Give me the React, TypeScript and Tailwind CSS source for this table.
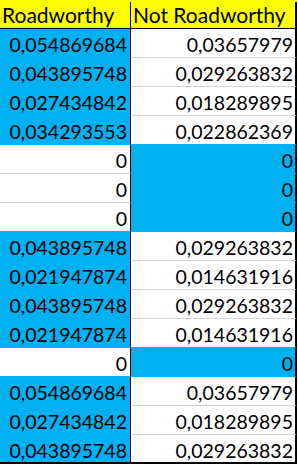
const BLUE = "bg-[#00b0f0]";

type Row = { left: string; right: string; leftBlue: boolean };

const rows: Row[] = [
  { left: "0,054869684", right: "0,03657979", leftBlue: true },
  { left: "0,043895748", right: "0,029263832", leftBlue: true },
  { left: "0,027434842", right: "0,018289895", leftBlue: true },
  { left: "0,034293553", right: "0,022862369", leftBlue: true },
  { left: "0", right: "0", leftBlue: false },
  { left: "0", right: "0", leftBlue: false },
  { left: "0", right: "0", leftBlue: false },
  { left: "0,043895748", right: "0,029263832", leftBlue: true },
  { left: "0,021947874", right: "0,014631916", leftBlue: true },
  { left: "0,043895748", right: "0,029263832", leftBlue: true },
  { left: "0,021947874", right: "0,014631916", leftBlue: true },
  { left: "0", right: "0", leftBlue: false },
  { left: "0,054869684", right: "0,03657979", leftBlue: true },
  { left: "0,027434842", right: "0,018289895", leftBlue: true },
  { left: "0,043895748", right: "0,029263832", leftBlue: true },
];

// gridline under a cell: hidden by fill when this cell or the one below is blue
function lineClass(blue: boolean, nextBlue: boolean | null) {
  if (nextBlue === null) return "border-b-2 border-b-black";
  if (blue || nextBlue) return "border-b border-b-[#00b0f0]";
  return "border-b border-b-[#d4d4d4]";
}

function Cell({
  value,
  blue,
  nextBlue,
  className,
}: {
  value: string;
  blue: boolean;
  nextBlue: boolean | null;
  className: string;
}) {
  return (
    <div
      className={`h-[29px] pt-[3px] text-right leading-[25px] ${blue ? BLUE : "bg-white"} ${lineClass(
        blue,
        nextBlue
      )} ${className}`}
    >
      {value}
    </div>
  );
}

export default function App() {
  return (
    <div
      className="w-[298px] h-[465px] bg-white text-black text-[19.5px]"
      style={{ fontFamily: "Lato, 'Open Sans', sans-serif" }}
    >
      <div className="w-[297px]">
        <div className="flex h-[29px] bg-[#ffff00] border-b border-black pt-[2px] leading-[26px] text-[21px]">
          <div className="w-[131px] pl-[2px] border-r border-black">Roadworthy</div>
          <div className="w-[166px] pl-[2px] border-r-2 border-black">Not Roadworthy</div>
        </div>
        {rows.map((r, i) => {
          const last = i === rows.length - 1;
          const next = rows[i + 1];
          return (
            <div key={i} className="flex">
              <Cell
                value={r.left}
                blue={r.leftBlue}
                nextBlue={last ? null : next.leftBlue}
                className="w-[131px] pr-[3px] border-r border-r-black"
              />
              <Cell
                value={r.right}
                blue={!r.leftBlue}
                nextBlue={last ? null : !next.leftBlue}
                className="w-[166px] pr-[2px] border-r-2 border-r-black"
              />
            </div>
          );
        })}
      </div>
    </div>
  );
}
